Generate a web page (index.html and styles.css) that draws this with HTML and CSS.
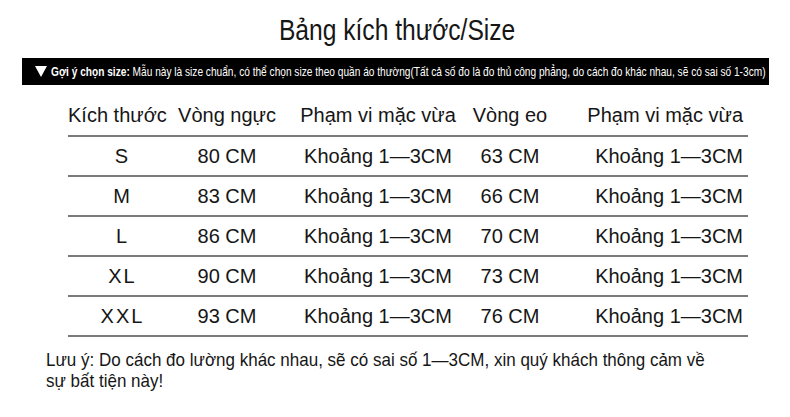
FILE: index.html
```html
<!DOCTYPE html>
<html lang="vi">
<head>
<meta charset="utf-8">
<title>Bảng kích thước/Size</title>
<link rel="stylesheet" href="styles.css">
</head>
<body>
<div class="page">
  <div class="title-wrap"><h1 class="title">Bảng kích thước/Size</h1></div>
  <div class="bar">
    <span class="tri"></span>
    <p class="bar-text"><b>Gợi ý chọn size:</b> Mẫu này là size chuẩn, có thể chọn size theo quần áo thường(Tất cả số đo là đo thủ công phẳng, do cách đo khác nhau, sẽ có sai số 1-3cm)</p>
  </div>
  <div class="table">
    <div class="row head">
      <span class="c1">Kích thước</span><span class="c2">Vòng ngực</span><span class="c3">Phạm vi mặc vừa</span><span class="c4">Vòng eo</span><span class="c5">Phạm vi mặc vừa</span>
    </div>
    <div class="row">
      <span class="c1 sz">S</span><span class="c2">80 CM</span><span class="c3">Khoảng 1—3CM</span><span class="c4">63 CM</span><span class="c5">Khoảng 1—3CM</span>
    </div>
    <div class="row">
      <span class="c1 sz">M</span><span class="c2">83 CM</span><span class="c3">Khoảng 1—3CM</span><span class="c4">66 CM</span><span class="c5">Khoảng 1—3CM</span>
    </div>
    <div class="row">
      <span class="c1 sz">L</span><span class="c2">86 CM</span><span class="c3">Khoảng 1—3CM</span><span class="c4">70 CM</span><span class="c5">Khoảng 1—3CM</span>
    </div>
    <div class="row">
      <span class="c1 sz sp">XL</span><span class="c2">90 CM</span><span class="c3">Khoảng 1—3CM</span><span class="c4">73 CM</span><span class="c5">Khoảng 1—3CM</span>
    </div>
    <div class="row">
      <span class="c1 sz sp">XXL</span><span class="c2">93 CM</span><span class="c3">Khoảng 1—3CM</span><span class="c4">76 CM</span><span class="c5">Khoảng 1—3CM</span>
    </div>
  </div>
  <p class="note">Lưu ý: Do cách đo lường khác nhau, sẽ có sai số 1—3CM, xin quý khách thông cảm về sự bất tiện này!</p>
</div>
</body>
</html>
```
FILE: styles.css
```css
html, body {
  margin: 0;
  padding: 0;
  background: #ffffff;
}
.page {
  width: 790px;
  height: 417px;
  overflow: hidden;
  color: #161616;
  font-family: "Liberation Sans", Arial, sans-serif;
}
.title-wrap {
  height: 36px;
  padding-top: 12px;
  margin-bottom: 10px;
  display: flex;
  justify-content: center;
}
.title {
  margin: 0 0 0 4px;
  line-height: 36px;
  font-weight: normal;
  font-size: 30px;
  white-space: nowrap;
  transform: scaleX(0.82);
  transform-origin: center;
}
.bar {
  margin: 0 21px 0 22px;
  height: 27px;
  background: #000;
  color: #fff;
  display: flex;
  align-items: center;
  padding-left: 13px;
  gap: 4px;
  overflow: hidden;
}
.tri {
  flex: none;
  width: 0;
  height: 0;
  border-left: 6px solid transparent;
  border-right: 6px solid transparent;
  border-top: 11px solid #fff;
}
.bar-text {
  margin: 0;
  font-size: 13px;
  white-space: nowrap;
  transform: scaleX(0.78);
  transform-origin: left center;
}
.bar-text b {
  font-weight: bold;
}
.table {
  margin: 11px 0 0 68px;
  width: 680px;
}
.row {
  display: grid;
  grid-template-columns: 98px 124px 176px 90px 1fr;
  height: 38px;
  align-items: center;
  border-bottom: 2px solid #7a7a7a;
  font-size: 20px;
}
.row.head {
  height: 39px;
}
.row span {
  text-align: center;
  white-space: nowrap;
}
.row .c2 {
  padding-right: 2px;
}
.row .c4 {
  padding-right: 2px;
}
.row .c5 {
  text-align: right;
  padding-right: 5px;
}
.row .sz {
  padding-left: 9px;
}
.row .sp {
  letter-spacing: 2px;
  padding-left: 11px;
}
.note {
  margin: 12px 0 0 46px;
  width: 755px;
  font-size: 19px;
  line-height: 21px;
  transform: scaleX(0.895);
  transform-origin: left top;
}
```
